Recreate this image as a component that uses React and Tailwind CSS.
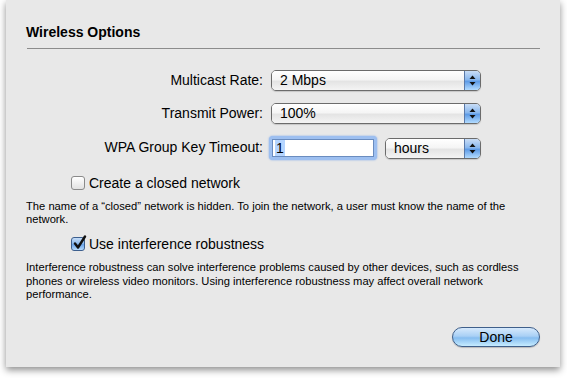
import React from "react";

function Arrows() {
  return (
    <svg width="7" height="11" viewBox="0 0 7 11">
      <path d="M3.5 0.5 L6.5 4 L0.5 4 Z" fill="#111" />
      <path d="M0.5 7 L6.5 7 L3.5 10.5 Z" fill="#111" />
    </svg>
  );
}

function Popup({ value, width }) {
  return (
    <div
      className={`flex h-[21px] items-stretch rounded-[5px] border border-[#6b6b6b] overflow-hidden shadow-[0_1px_1px_rgba(0,0,0,0.15)] ${width}`}
    >
      <div className="flex flex-1 items-center pl-[8px] bg-[linear-gradient(#ffffff_0%,#f5f5f5_45%,#e4e4e4_55%,#f4f4f4_100%)] text-[14px] text-black">
        {value}
      </div>
      <div className="flex w-[16px] items-center justify-center border-l border-[#5a79a8] bg-[linear-gradient(#c9ddf6_0%,#8ab8ee_45%,#5e9be6_55%,#b2dbff_100%)]">
        <Arrows />
      </div>
    </div>
  );
}

function Checkbox({ checked }) {
  return (
    <div
      className={`relative h-[14px] w-[14px] rounded-[3px] border ${
        checked
          ? "border-[#3d5f8e] bg-[linear-gradient(#c5dcf7_0%,#8dbbee_45%,#6aa3e8_55%,#b7dcff_100%)]"
          : "border-[#8a8a8a] bg-[linear-gradient(#ffffff_0%,#f0f0f0_50%,#e2e2e2_100%)]"
      }`}
    >
      {checked && (
        <svg
          className="absolute left-[1px] top-[-3px]"
          width="14"
          height="15"
          viewBox="0 0 14 15"
        >
          <path
            d="M2 8.5 L5 12.5 L12 1.5"
            fill="none"
            stroke="#111"
            strokeWidth="2.4"
            strokeLinecap="round"
            strokeLinejoin="round"
          />
        </svg>
      )}
    </div>
  );
}

export default function App() {
  return (
    <div className="w-[567px] h-[378px] bg-white font-['Liberation_Sans',Arial,sans-serif] text-black">
      <div className="ml-[6px] flex h-[367px] w-[554px] flex-col bg-[#e8e8e8] px-[20px] pt-[24px] shadow-[0_3px_7px_rgba(0,0,0,0.45)]">
        {/* Title */}
        <div className="h-[17px] text-[14px] font-bold leading-[17px]">Wireless Options</div>
        <div className="mt-[7px] ml-px h-px bg-[#8c8c8c]"></div>

        {/* Rows */}
        <div className="mt-[21px] flex h-[21px] items-center">
          <div className="w-[237px] text-right text-[14px]">Multicast Rate:</div>
          <div className="ml-[8px]">
            <Popup value="2 Mbps" width="w-[210px]" />
          </div>
        </div>

        <div className="mt-[12px] flex h-[21px] items-center">
          <div className="w-[237px] text-right text-[14px]">Transmit Power:</div>
          <div className="ml-[8px]">
            <Popup value="100%" width="w-[210px]" />
          </div>
        </div>

        <div className="mt-[12px] flex h-[23px] items-center">
          <div className="w-[237px] text-right text-[14px]">WPA Group Key Timeout:</div>
          <div className="ml-[6px] rounded-[4px] bg-[#9dbff0] p-[3px] shadow-[0_0_2px_#7aa5e8]">
            <div className="flex h-[18px] w-[102px] items-center border border-[#6a8cbf] bg-white pl-[2px] text-[14px]">
              <span className="bg-[#b5d5ff] px-px leading-[16px]">1</span>
            </div>
          </div>
          <div className="ml-[8px] mt-[2px]">
            <Popup value="hours" width="w-[96px]" />
          </div>
        </div>

        {/* Closed network */}
        <div className="mt-[17px] ml-[45px] flex h-[14px] items-center gap-[4px]">
          <Checkbox />
          <span className="text-[14px]">Create a closed network</span>
        </div>
        <p className="mt-[10px] text-[11.2px] leading-[13px]">
          The name of a “closed” network is hidden. To join the network, a user must know the name of the
          <br />
          network.
        </p>

        {/* Interference */}
        <div className="mt-[11px] ml-[45px] flex h-[14px] items-center gap-[4px]">
          <Checkbox checked />
          <span className="text-[14px]">Use interference robustness</span>
        </div>
        <p className="mt-[10px] text-[11.2px] leading-[13.5px]">
          Interference robustness can solve interference problems caused by other devices, such as cordless
          <br />
          phones or wireless video monitors. Using interference robustness may affect overall network
          <br />
          performance.
        </p>

        {/* Done */}
        <div className="mt-auto mb-[20px] flex justify-end">
          <button className="flex h-[20px] w-[88px] items-center justify-center rounded-full border border-[#3f5f8a] bg-[linear-gradient(#d6e9fc_0%,#a9d0f5_45%,#86bdf0_55%,#c6ecff_100%)] text-[14px] text-black shadow-[0_1px_1px_rgba(0,0,0,0.2)]">
            Done
          </button>
        </div>
      </div>
    </div>
  );
}
